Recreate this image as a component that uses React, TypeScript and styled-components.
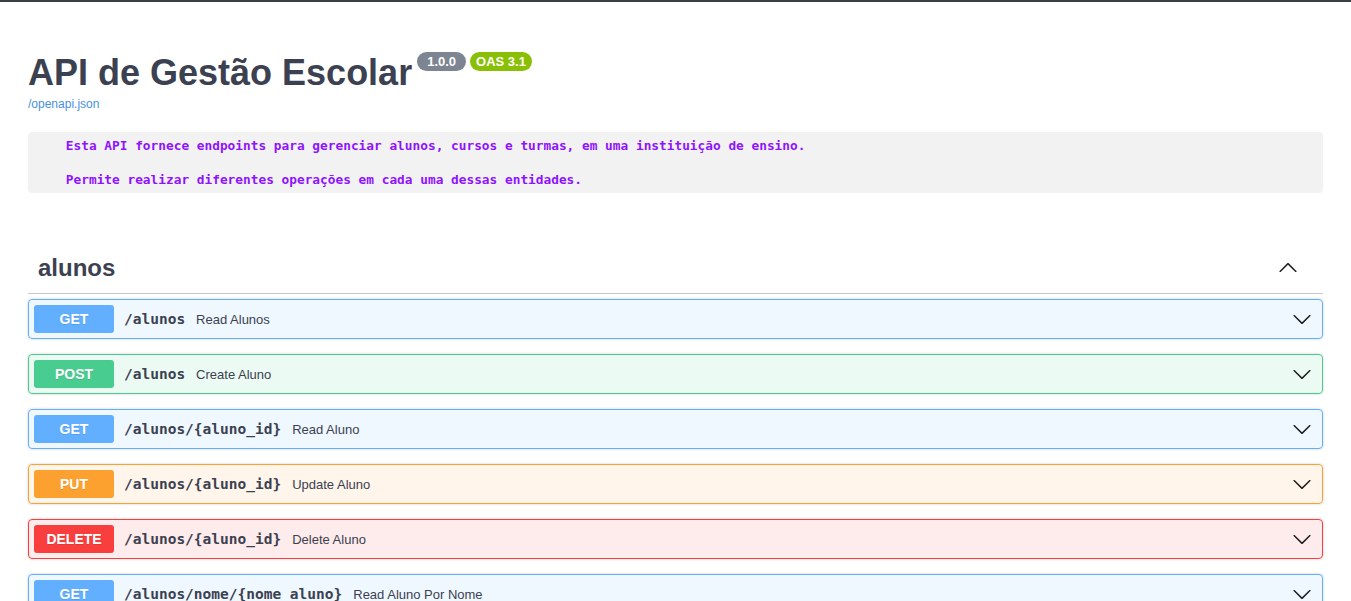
import React from 'react';
import styled, { createGlobalStyle } from 'styled-components';

const GlobalStyle = createGlobalStyle`
  html {
    scrollbar-width: none;
  }
  body {
    margin: 0;
    background: #fff;
    font-family: 'Liberation Sans', Arial, sans-serif;
    color: #3b4151;
  }
`;

const methodColors: any = {
  GET: '#61affe',
  POST: '#49cc90',
  PUT: '#fca130',
  DELETE: '#f93e3e',
};

const TopLine = styled.div`
  height: 2px;
  background: #3a3f45;
`;

const Wrapper = styled.div`
  box-sizing: border-box;
  padding: 0 28px;
  width: 100%;
`;

const Info = styled.div`
  margin: 50px 0;
`;

const TitleRow = styled.div`
  display: flex;
  align-items: flex-start;
`;

const Title = styled.h2`
  margin: 0;
  font-size: 36px;
  font-weight: 700;
  line-height: 41px;
  color: #3b4151;
`;

const Badge = styled.span<{ $bg: string; $pad: number }>`
  display: inline-block;
  margin-left: 5px;
  padding: 2px ${(p) => p.$pad}px 2px;
  border-radius: 57px;
  background: ${(p) => p.$bg};
  color: #fff;
  font-size: 13px;
  font-weight: 700;
  line-height: 15px;
  & + & {
    margin-left: 4px;
  }
`;

const SpecLink = styled.a`
  display: block;
  margin-top: 4px;
  font-size: 12px;
  line-height: 14px;
  color: #4990e2;
  text-decoration: none;
`;

const Description = styled.pre`
  margin: 21px 0 0;
  padding: 5px 7px;
  border-radius: 4px;
  background: rgba(0, 0, 0, 0.05);
  color: #9012fe;
  font-family: 'DejaVu Sans Mono', 'Liberation Mono', monospace;
  font-size: 12.8px;
  font-weight: 600;
  line-height: 17px;
  white-space: pre;
`;

const TagHeader = styled.div`
  display: flex;
  align-items: center;
  padding: 10px 20px 10px 10px;
  border-bottom: 1px solid rgba(59, 65, 81, 0.3);
  margin: 0 0 5px;
  cursor: pointer;
`;

const TagName = styled.h3`
  flex: 1;
  margin: 0;
  font-size: 24px;
  font-weight: 700;
  line-height: 30px;
  color: #3b4151;
`;

const Arrow = styled.svg<{ $up?: boolean }>`
  width: 20px;
  height: 20px;
  margin-right: 5px;
  fill: #1b1b1b;
  transform: ${(p) => (p.$up ? 'rotate(180deg)' : 'none')};
`;

const OpBlock = styled.div<{ $color: string }>`
  display: flex;
  align-items: center;
  padding: 5px;
  margin: 0 0 15px;
  border: 1px solid ${(p) => p.$color};
  border-radius: 4px;
  background: ${(p) => p.$color}1a;
  box-shadow: 0 0 3px rgba(0, 0, 0, 0.19);
`;

const Method = styled.span<{ $color: string }>`
  min-width: 80px;
  padding: 6px 0;
  border-radius: 3px;
  background: ${(p) => p.$color};
  color: #fff;
  font-size: 14px;
  font-weight: 700;
  line-height: 16px;
  text-align: center;
  text-shadow: 0 1px 0 rgba(0, 0, 0, 0.1);
`;

const Path = styled.span`
  padding: 0 11px 0 10px;
  font-family: 'DejaVu Sans Mono', 'Liberation Mono', monospace;
  font-size: 14.5px;
  font-weight: 700;
  color: #3b4151;
`;

const Summary = styled.span`
  flex: 1;
  font-size: 13px;
  color: #3b4151;
`;

const ChevronIcon = ({ up }: { up?: boolean }) => (
  <Arrow $up={up} viewBox="0 0 20 20" aria-hidden="true">
    <path d="M17.418 6.109c.272-.268.709-.268.979 0s.271.701 0 .969l-7.908 7.83c-.27.268-.707.268-.979 0l-7.908-7.83c-.27-.268-.27-.701 0-.969.271-.268.709-.268.979 0L10 13.25l7.418-7.141z" />
  </Arrow>
);

const operations = [
  { method: 'GET', path: '/alunos', summary: 'Read Alunos' },
  { method: 'POST', path: '/alunos', summary: 'Create Aluno' },
  { method: 'GET', path: '/alunos/{aluno_id}', summary: 'Read Aluno' },
  { method: 'PUT', path: '/alunos/{aluno_id}', summary: 'Update Aluno' },
  { method: 'DELETE', path: '/alunos/{aluno_id}', summary: 'Delete Aluno' },
  { method: 'GET', path: '/alunos/nome/{nome_aluno}', summary: 'Read Aluno Por Nome' },
];

const descText =
  '    Esta API fornece endpoints para gerenciar alunos, cursos e turmas, em uma instituição de ensino.\n\n    Permite realizar diferentes operações em cada uma dessas entidades.';

const App = () => {
  return (
    <>
      <GlobalStyle />
      <TopLine />
      <Wrapper>
        <Info>
          <TitleRow>
            <Title>API de Gestão Escolar</Title>
            <Badge $bg="#7d8492" $pad={10}>1.0.0</Badge>
            <Badge $bg="#89bf04" $pad={6}>OAS 3.1</Badge>
          </TitleRow>
          <SpecLink href="#">/openapi.json</SpecLink>
          <Description>{descText}</Description>
        </Info>
        <section>
          <TagHeader>
            <TagName>alunos</TagName>
            <ChevronIcon up />
          </TagHeader>
          {operations.map((op, i) => {
            const color = methodColors[op.method];
            return (
              <OpBlock key={i} $color={color}>
                <Method $color={color}>{op.method}</Method>
                <Path>{op.path}</Path>
                <Summary>{op.summary}</Summary>
                <ChevronIcon />
              </OpBlock>
            );
          })}
        </section>
      </Wrapper>
    </>
  );
};

export default App;
